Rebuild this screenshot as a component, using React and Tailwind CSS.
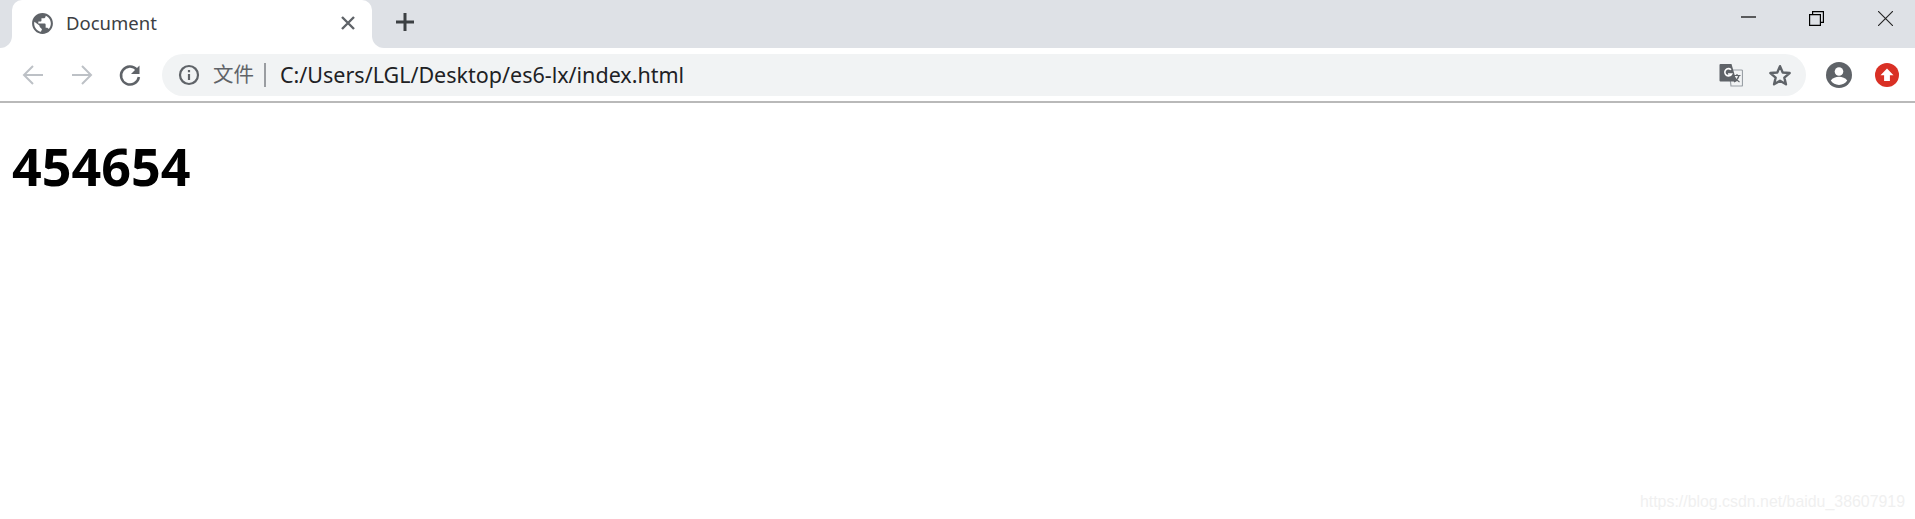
import React from 'react';

const uiFont = "font-['Noto_Sans','Noto_Sans_CJK_SC',sans-serif]";

const Globe = () => (
  <svg width="25" height="25" viewBox="0 0 24 24" fill="#5f6368">
    <path d="M12 2C6.48 2 2 6.48 2 12s4.48 10 10 10 10-4.48 10-10S17.52 2 12 2zm-1.500 18c-3.500-.6-6.500-4-6.500-8 0-.62.08-1.21.21-1.790L9 14c0 2 2 2.500 2.500 3.500zm7.400-2.610c-.26-.81-1-1.390-1.900-1.390h-1v-3c0-.55-.45-1-1-1H8v-2h2c.55 0 1-.45 1-1V7h2c1.100 0 2-.9 2-2v-.41c2.930 1.190 5 4.060 5 7.410 0 2.080-.8 3.970-2.100 5.390z" />
  </svg>
);

const Arrow = ({ flip }) => (
  <svg width="24" height="24" viewBox="0 0 24 24" fill="none" stroke="#bdc1c6" strokeWidth="2" className={flip ? 'rotate-180' : ''}>
    <path d="M22 12H3.500M12 3l-9 9 9 9" />
  </svg>
);

const Reload = () => (
  <svg width="24" height="24" viewBox="0 0 24 24" fill="none">
    <path d="M18.800 6.600A9 9 0 1 0 20.900 14" stroke="#5f6368" strokeWidth="2.500" />
    <path d="M21.500 2.500v8.500H13z" fill="#5f6368" />
  </svg>
);

const Info = () => (
  <svg width="22" height="22" viewBox="0 0 22 22" fill="none">
    <circle cx="11" cy="11" r="9" stroke="#5f6368" strokeWidth="2.200" />
    <path d="M11 10v6M11 6v2.200" stroke="#5f6368" strokeWidth="2.200" />
  </svg>
);

const Translate = () => (
  <svg width="24" height="24" viewBox="0 0 24 24">
    <path d="M10 7h12.500a1 1 0 0 1 1 1v14a1 1 0 0 1-1 1H12z" fill="#f1f3f4" stroke="#9aa0a6" strokeWidth="1.200" />
    <path d="M1.500 1h11l5 17.500H1.500a1 1 0 0 1-1-1V2a1 1 0 0 1 1-1z" fill="#5f6368" />
    <path d="M12 6.700A3.600 3.600 0 1 0 12.600 11H9" fill="none" stroke="#fff" strokeWidth="1.600" />
    <path d="M14.500 12.500h7M18 11v1.500M20 12.500c-.7 3-2.600 5-5 6.500M15.800 14.500c.8 1.800 2.500 3.300 4.700 4.500" fill="none" stroke="#5f6368" strokeWidth="1.200" />
  </svg>
);

const Star = () => (
  <svg width="26" height="26" viewBox="0 0 24 24" fill="none">
    <path d="M12 3.800l2.500 5.900 6.400.5-4.900 4.200 1.500 6.200L12 17.300l-5.500 3.300L8 14.400 3.100 10.200l6.400-.5z" stroke="#5f6368" strokeWidth="2.200" strokeLinejoin="round" />
  </svg>
);

const Account = () => (
  <svg width="26" height="26" viewBox="0 0 26 26">
    <circle cx="13" cy="13" r="13" fill="#5f6368" />
    <circle cx="13" cy="9.500" r="4.300" fill="#fff" />
    <path d="M4.800 18.600c1.800-2.600 5-3.800 8.200-3.800s6.400 1.200 8.200 3.800A10.200 10.200 0 0 1 13 23a10.200 10.200 0 0 1-8.200-4.400z" fill="#fff" />
  </svg>
);

const Upload = () => (
  <svg width="24" height="24" viewBox="0 0 24 24">
    <circle cx="12" cy="12" r="12" fill="#d93025" />
    <path d="M12 5.500l6.500 6.700h-3.600V18H9.100v-5.800H5.500z" fill="#fff" />
  </svg>
);

const App = () => {
  return (
    <div className={`flex h-[519px] flex-col overflow-hidden bg-white ${uiFont}`}>
      {/* Tab strip */}
      <div className="flex h-12 shrink-0 bg-[#dee1e6]">
        <div className="w-3 bg-white">
          <div className="h-full rounded-br-[12px] bg-[#dee1e6]" />
        </div>
        <div className="flex w-[360px] items-center rounded-t-[10px] bg-white pb-[2px] pl-[18px] pr-[17px]">
          <Globe />
          <span className="ml-[11px] flex-1 text-[18.500px] leading-none text-[#3c4043]">Document</span>
          <svg width="14" height="14" viewBox="0 0 14 14" stroke="#5f6368" strokeWidth="2.400">
            <path d="M1 1l12 12M13 1L1 13" />
          </svg>
        </div>
        <div className="flex-1 bg-white">
          <div className="flex h-full items-start rounded-bl-[12px] bg-[#dee1e6]">
            <svg className="ml-6 mt-[13px]" width="18" height="18" viewBox="0 0 18 18" stroke="#3c4043" strokeWidth="3">
              <path d="M9 0v18M0 9h18" />
            </svg>
            <div className="ml-auto flex items-start">
              <svg className="mr-[53px] mt-[16px]" width="15" height="2" viewBox="0 0 15 2" stroke="#000" strokeWidth="1.200">
                <path d="M0 1h15" />
              </svg>
              <svg className="mr-[54px] mt-[11px]" width="15" height="15" viewBox="0 0 15 15" fill="none" stroke="#000" strokeWidth="1.200">
                <path d="M.6 3.600h10.800v10.800H.6zM3.600 3.600V.6h10.800v10.800h-3" />
              </svg>
              <svg className="mr-[22px] mt-[11px]" width="15" height="15" viewBox="0 0 15 15" stroke="#222" strokeWidth="1.100">
                <path d="M0 0l15 15M15 0L0 15" />
              </svg>
            </div>
          </div>
        </div>
      </div>

      {/* Toolbar */}
      <div className="flex h-[55px] shrink-0 items-center border-b-2 border-[#b9b9b9] pl-[21px]">
        <Arrow />
        <div className="ml-[25px]"><Arrow flip /></div>
        <div className="ml-6"><Reload /></div>
        <div className="ml-5 flex h-[42px] w-[1644px] items-center rounded-full bg-[#f1f3f4] pl-[16px] pr-[13px]">
          <Info />
          <span className="ml-[13px] text-[20.500px] leading-none text-[#5f6368]">文件</span>
          <span className="ml-[10px] h-6 w-[2px] bg-[#9a9da1]" />
          <span className="ml-[14px] flex-1 text-[21.500px] leading-none text-[#202124]">C:/Users/LGL/Desktop/es6-lx/index.html</span>
          <Translate />
          <div className="ml-6"><Star /></div>
        </div>
        <div className="ml-5"><Account /></div>
        <div className="ml-[23px]"><Upload /></div>
      </div>

      {/* Page content */}
      <div className="flex flex-1 flex-col pl-3 pt-[28px]">
        <h1 className="text-[52px] font-bold leading-[70px] text-black">454654</h1>
        <div className="mt-auto self-end pb-[7px] pr-[10px] font-['Liberation_Sans',sans-serif] text-[15.900px] leading-5 text-[#f0f0f0]">
          https://blog.csdn.net/baidu_38607919
        </div>
      </div>
    </div>
  );
};

export default App;
